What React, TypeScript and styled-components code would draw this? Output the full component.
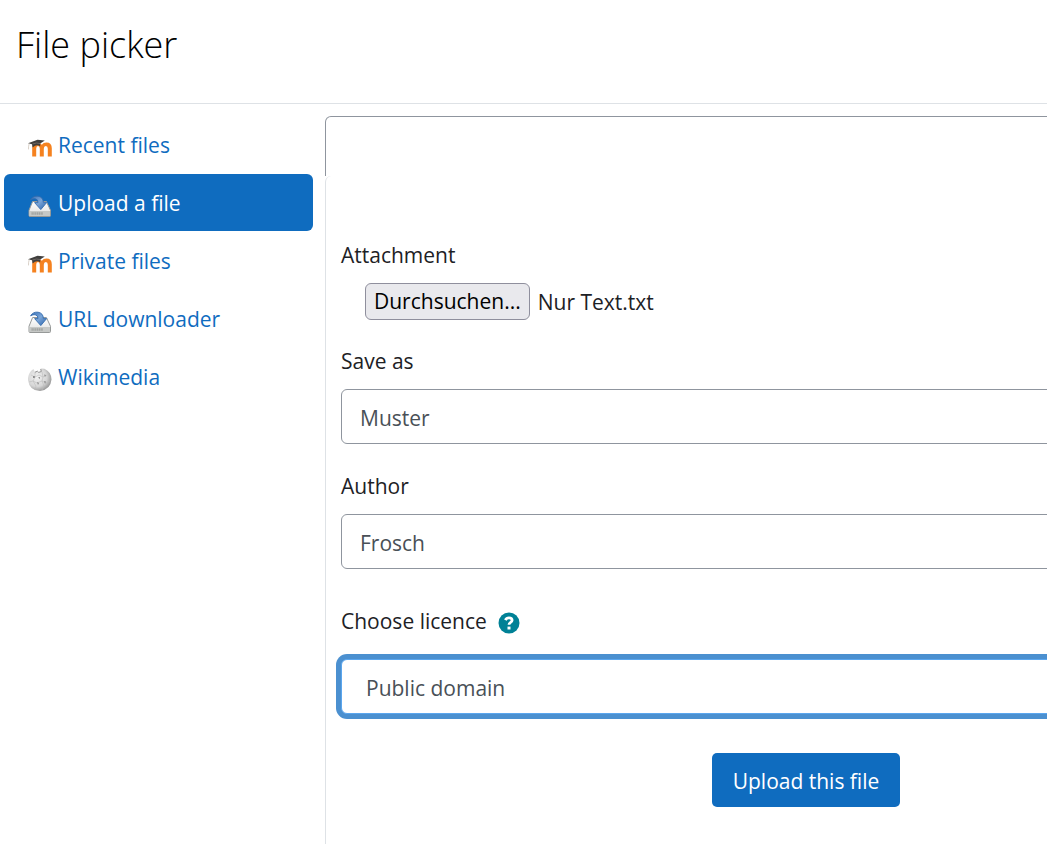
import React, { useRef, useState } from "react";
import styled, { createGlobalStyle } from "styled-components";

const GlobalStyle = createGlobalStyle`
  * { box-sizing: border-box; }
  body {
    margin: 0;
    background: #fff;
    color: #1d2125;
    font-family: "Segoe UI", "Open Sans", "Noto Sans", sans-serif;
    font-size: 21px;
    line-height: 34px;
  }
  button, input, select { font: inherit; }
`;

const Viewport = styled.div`
  overflow: hidden;
`;

const Dialog = styled.div`
  display: flex;
  flex-direction: column;
  width: calc(100% + 240px);
  min-height: 100vh;
`;

const Header = styled.header`
  padding: 19px 16px 32px;
  border-bottom: 1px solid #dee2e6;
`;

const Title = styled.h1`
  margin: 0;
  color: #000;
  font-size: 36px;
  font-weight: 300;
  line-height: 52px;
`;

const Body = styled.div`
  display: flex;
  flex: 1;
  padding: 12px 0 0 4px;
`;

const Repositories = styled.nav`
  display: flex;
  flex-direction: column;
  flex: 0 0 309px;
  gap: 1px;
  margin-right: 12px;
`;

const Repository = styled.a<{ $active?: boolean }>`
  display: flex;
  align-items: center;
  gap: 6px;
  height: 57px;
  padding: 0 23px;
  border-radius: 6px;
  background: ${(p) => (p.$active ? "#0f6cbf" : "transparent")};
  color: ${(p) => (p.$active ? "#fff" : "#0f6cbf")};
  text-decoration: none;

  svg {
    flex: none;
    margin-top: 6px;
  }
`;

const Panel = styled.main`
  display: flex;
  flex-direction: column;
  flex: 1;
`;

const Toolbar = styled.div`
  height: 60px;
  border: 1px solid #8f959e;
  border-bottom: 0;
  border-radius: 6px 6px 0 0;
`;

const Content = styled.form`
  flex: 1;
  padding: 62px 16px 36px 15px;
  border-left: 1px solid #dee2e6;
  border-top-left-radius: 6px;
`;

const Field = styled.div<{ $space: number }>`
  margin-bottom: ${(p) => p.$space}px;
`;

const Label = styled.label`
  display: block;
  width: fit-content;
  margin-bottom: 11px;
`;

const LabelRow = styled.div`
  display: flex;
  align-items: center;
  gap: 11px;
  margin-bottom: 21px;

  ${Label} { margin: 0; }
`;

const FileRow = styled.div`
  display: flex;
  align-items: center;
  gap: 8px;
  padding-left: 24px;
`;

const BrowseButton = styled.button`
  height: 37px;
  padding: 0 8px;
  border: 1px solid #8f8f9d;
  border-radius: 6px;
  background: #e9e9ed;
  color: #000;
  line-height: 35px;
`;

const TextInput = styled.input`
  display: block;
  width: 100%;
  height: 55px;
  padding: 2px 18px 0;
  border: 1px solid #8f959e;
  border-radius: 6px;
  background: #fff;
  color: #495057;
`;

const Select = styled.select`
  display: block;
  width: 100%;
  height: 55px;
  padding: 2px 24px 0;
  appearance: none;
  border: 1px solid #5ba6ee;
  border-radius: 6px;
  outline: 0;
  background: #fff;
  box-shadow: 0 0 0 5px #4b90d0;
  color: #495057;
`;

const HelpButton = styled.button`
  display: flex;
  margin-top: 4px;
  padding: 0;
  border: 0;
  background: none;
`;

const Actions = styled.div`
  display: flex;
  justify-content: center;
`;

const SubmitButton = styled.button`
  height: 54px;
  padding: 2px 21px 0;
  border: 0;
  border-radius: 5px;
  background: #0f6cbf;
  color: #fff;
`;

const MoodleIcon = () => (
  <svg width="25" height="24" viewBox="0 0 25 24" aria-hidden="true">
    <path
      d="M5.2 20.6V12.3Q5.2 6.6 10.2 6.6Q13.2 6.6 14.8 8.8Q16.4 6.6 19.4 6.6Q24.8 6.6 24.8 12.3V20.6H20.8V12.8Q20.8 10.1 18.8 10.1Q16.8 10.1 16.8 12.8V20.6H12.8V12.8Q12.8 10.1 11 10.1Q9.2 10.1 9.2 12.8V20.6Z"
      fill="#f58220"
    />
    <path d="M1 7.2L10.5 3.8L17.8 4.6L13.2 7.6V10.2Q9.4 7.6 5.6 11.6L5 8.3Z" fill="#403f3e" />
    <path d="M5.4 8Q9.5 6.2 13.2 7.6" fill="none" stroke="#77706b" strokeWidth="0.8" />
    <path d="M2.3 7.4Q1.3 10.2 1.5 13.4" fill="none" stroke="#c9bdb0" strokeWidth="0.7" />
  </svg>
);

const DriveIcon = ({ id }: { id: string }) => (
  <svg width="25" height="24" viewBox="0 0 25 24" aria-hidden="true">
    <defs>
      <linearGradient id={`${id}-case`} x1="0" y1="0" x2="0" y2="1">
        <stop offset="0" stopColor="#fff" />
        <stop offset="1" stopColor="#dedfde" />
      </linearGradient>
      <linearGradient id={`${id}-arrow`} x1="0" y1="0" x2="1" y2="1">
        <stop offset="0" stopColor="#3770b8" />
        <stop offset="0.5" stopColor="#7ba6d8" />
        <stop offset="1" stopColor="#2a62aa" />
      </linearGradient>
    </defs>
    <path
      d="M5.6 7.5H19.4L23.5 16.3V21.5Q23.5 22.5 22.5 22.5H3Q2 22.5 2 21.5V16.3Z"
      fill={`url(#${id}-case)`}
      stroke="#969998"
    />
    <path d="M2.5 17H23V22H2.5Z" fill="#c6c8c6" />
    <path d="M4.5 19.5H16" stroke="#a0a3a1" strokeWidth="2.4" strokeDasharray="1.3 0.5" />
    <path
      d="M3.6 5.8Q6.2 1.6 11 2.2Q16.2 3 16.4 8.6H19.6L13.8 15.6L7.6 8.6H11Q11.1 5.2 8.1 4.7Q6 4.4 3.6 5.8Z"
      fill={`url(#${id}-arrow)`}
      stroke="#326bae"
      strokeWidth="0.9"
      strokeLinejoin="round"
    />
  </svg>
);

const WikimediaIcon = () => (
  <svg width="25" height="24" viewBox="0 0 25 24" aria-hidden="true">
    <defs>
      <radialGradient id="globe" cx="0.38" cy="0.38" r="0.7">
        <stop offset="0" stopColor="#f2f2f2" />
        <stop offset="0.6" stopColor="#d6d6d6" />
        <stop offset="1" stopColor="#8a8a8a" />
      </radialGradient>
    </defs>
    <path
      d="M4 3L6.4 1L8 4L10.4 3L11.7 4.2L14.3 3.5L13.7 0.6L17.4 0.8Q24.5 4 24.5 11.6Q23.6 21.8 13 23Q2.5 22.6 1 12.2Q.8 6.6 4 3Z"
      fill="url(#globe)"
    />
    <path
      d="M4 7L8 9L12 7L16 9L20 7M2 14L6 13L10 15L15 13L19 15L23 13M8 4V9L6 13L9 18L8 22M15 4L16 9L15 13L17 18L15 22"
      fill="none"
      stroke="#bcbcbc"
      strokeWidth="0.6"
    />
    <path
      d="M6 8H7.8V10H6ZM11 9.5L13 9V11ZM17 6.5L19 7L18 9ZM10 14L12 15L11 17ZM17 13L19 13.5L18 16Z"
      fill="#8c8c8c"
    />
    <path d="M13.7 1L14.3 3.5L11.7 4.4L10.4 3.2L8 4.2" fill="none" stroke="#8a8a8a" strokeWidth="0.9" />
  </svg>
);

const HelpIcon = () => (
  <svg width="22" height="22" viewBox="0 0 22 22" aria-hidden="true">
    <circle cx="11" cy="11" r="10.5" fill="#008196" />
    <path
      d="M7.4 8.1Q8.4 5.8 11 5.8Q14.1 5.8 14.1 8.3Q14.1 9.7 12.4 10.6Q11 11.4 11 12.7"
      fill="none"
      stroke="#fff"
      strokeWidth="2.8"
    />
    <path d="M9.5 14.6H12.5V17.5H9.5Z" fill="#fff" />
  </svg>
);

const repositories = [
  { name: "Recent files", icon: <MoodleIcon /> },
  { name: "Upload a file", icon: <DriveIcon id="upload" /> },
  { name: "Private files", icon: <MoodleIcon /> },
  { name: "URL downloader", icon: <DriveIcon id="url" /> },
  { name: "Wikimedia", icon: <WikimediaIcon /> },
];

export default function App() {
  const picker = useRef<HTMLInputElement>(null);
  const [active, setActive] = useState("Upload a file");
  const [fileName, setFileName] = useState("Nur Text.txt");

  return (
    <Viewport>
      <GlobalStyle />
      <Dialog role="dialog" aria-labelledby="title">
        <Header>
          <Title id="title">File picker</Title>
        </Header>
        <Body>
          <Repositories aria-label="Repositories">
            {repositories.map(({ name, icon }) => (
              <Repository
                key={name}
                href="#"
                $active={name === active}
                aria-current={name === active ? "true" : undefined}
                onClick={(e) => {
                  e.preventDefault();
                  setActive(name);
                }}
              >
                {icon}
                {name}
              </Repository>
            ))}
          </Repositories>
          <Panel>
            <Toolbar />
            <Content onSubmit={(e) => e.preventDefault()}>
              <Field $space={24}>
                <Label htmlFor="attachment">Attachment</Label>
                <FileRow>
                  <input
                    ref={picker}
                    id="attachment"
                    type="file"
                    hidden
                    onChange={(e) => setFileName(e.target.files?.[0]?.name ?? "")}
                  />
                  <BrowseButton type="button" onClick={() => picker.current?.click()}>
                    Durchsuchen...
                  </BrowseButton>
                  <span>{fileName}</span>
                </FileRow>
              </Field>
              <Field $space={25}>
                <Label htmlFor="save-as">Save as</Label>
                <TextInput id="save-as" type="text" defaultValue="Muster" />
              </Field>
              <Field $space={35}>
                <Label htmlFor="author">Author</Label>
                <TextInput id="author" type="text" defaultValue="Frosch" />
              </Field>
              <Field $space={39}>
                <LabelRow>
                  <Label htmlFor="licence">Choose licence</Label>
                  <HelpButton type="button" aria-label="Help with Choose licence">
                    <HelpIcon />
                  </HelpButton>
                </LabelRow>
                <Select id="licence" defaultValue="public">
                  <option value="public">Public domain</option>
                </Select>
              </Field>
              <Actions>
                <SubmitButton type="submit">Upload this file</SubmitButton>
              </Actions>
            </Content>
          </Panel>
        </Body>
      </Dialog>
    </Viewport>
  );
}
